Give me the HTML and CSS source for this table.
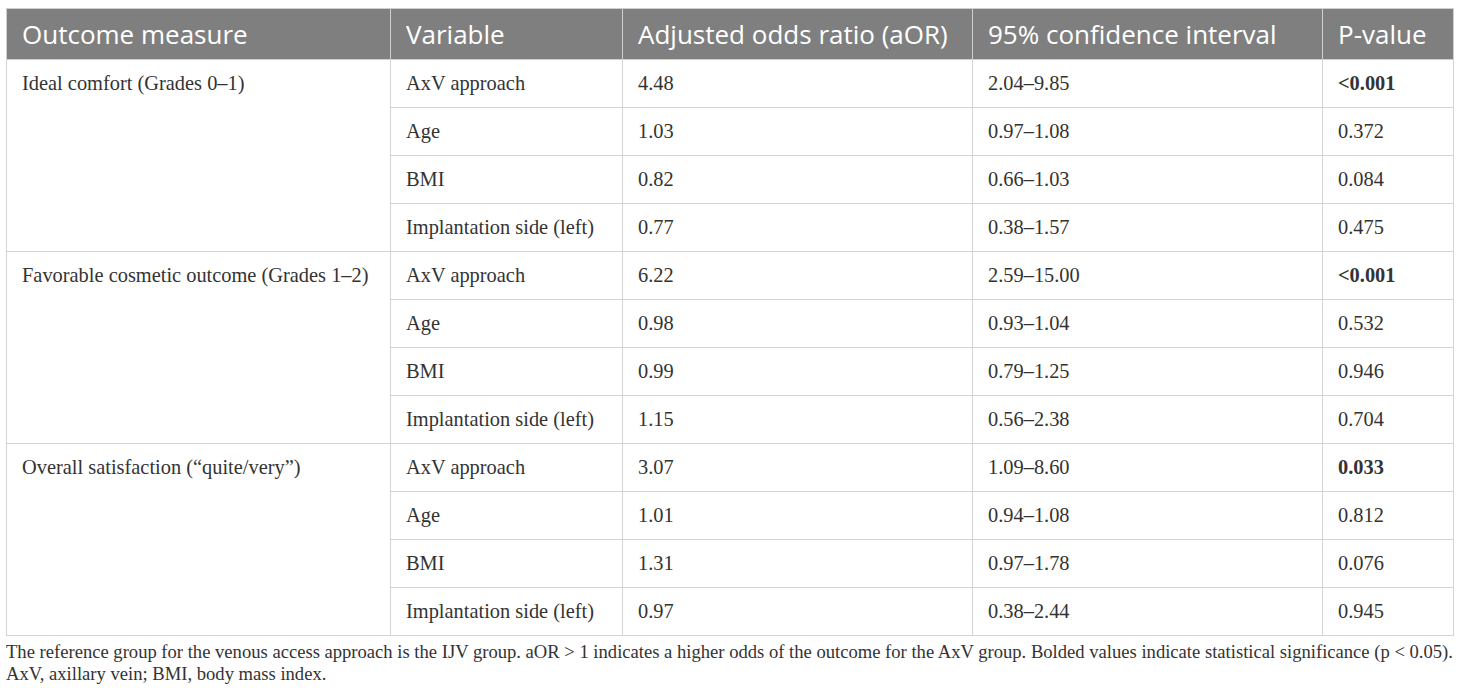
FILE: index.html
```html
<!DOCTYPE html>
<html>
<head>
<meta charset="utf-8">
<link rel="stylesheet" href="styles.css">
</head>
<body>
<div class="wrap">
<table class="tbl">
<colgroup>
<col class="c1"><col class="c2"><col class="c3"><col class="c4"><col class="c5">
</colgroup>
<thead>
<tr><th>Outcome measure</th><th>Variable</th><th>Adjusted odds ratio (aOR)</th><th>95% confidence interval</th><th>P-value</th></tr>
</thead>
<tbody>
<tr><td rowspan="4" class="grp">Ideal comfort (Grades 0–1)</td><td>AxV approach</td><td>4.48</td><td>2.04–9.85</td><td class="b">&lt;0.001</td></tr>
<tr><td>Age</td><td>1.03</td><td>0.97–1.08</td><td>0.372</td></tr>
<tr><td>BMI</td><td>0.82</td><td>0.66–1.03</td><td>0.084</td></tr>
<tr><td>Implantation side (left)</td><td>0.77</td><td>0.38–1.57</td><td>0.475</td></tr>
<tr><td rowspan="4" class="grp">Favorable cosmetic outcome (Grades 1–2)</td><td>AxV approach</td><td>6.22</td><td>2.59–15.00</td><td class="b">&lt;0.001</td></tr>
<tr><td>Age</td><td>0.98</td><td>0.93–1.04</td><td>0.532</td></tr>
<tr><td>BMI</td><td>0.99</td><td>0.79–1.25</td><td>0.946</td></tr>
<tr><td>Implantation side (left)</td><td>1.15</td><td>0.56–2.38</td><td>0.704</td></tr>
<tr><td rowspan="4" class="grp">Overall satisfaction (“quite/very”)</td><td>AxV approach</td><td>3.07</td><td>1.09–8.60</td><td class="b">0.033</td></tr>
<tr><td>Age</td><td>1.01</td><td>0.94–1.08</td><td>0.812</td></tr>
<tr><td>BMI</td><td>1.31</td><td>0.97–1.78</td><td>0.076</td></tr>
<tr><td>Implantation side (left)</td><td>0.97</td><td>0.38–2.44</td><td>0.945</td></tr>
</tbody>
</table>
<div class="foot">
<p>The reference group for the venous access approach is the IJV group. aOR &gt; 1 indicates a higher odds of the outcome for the AxV group. Bolded values indicate statistical significance (p &lt; 0.05).</p>
<p>AxV, axillary vein; BMI, body mass index.</p>
</div>
</div>
</body>
</html>
```
FILE: styles.css
```css
html, body {
  margin: 0;
  padding: 0;
  background: #fff;
}
.wrap {
  padding: 8px 7px 0 6px;
}
.tbl {
  width: 1447px;
  border-collapse: collapse;
  table-layout: fixed;
  font-family: "Liberation Serif", "Times New Roman", serif;
  color: #333;
}
.c1 { width: 384px; }
.c2 { width: 232px; }
.c3 { width: 350px; }
.c4 { width: 350px; }
.c5 { width: 131px; }
.tbl th {
  background: #7f7f7f;
  color: #fff;
  font-family: "Open Sans", "Noto Sans", sans-serif;
  font-weight: 400;
  font-size: 26px;
  text-align: left;
  height: 51px;
  padding: 0 15px;
  border: 1px solid #cfcfcf;
  box-sizing: border-box;
  white-space: nowrap;
}
.tbl td {
  font-size: 20.4px;
  height: 48px;
  padding: 0 15px;
  border: 1px solid #d4d4d4;
  box-sizing: border-box;
  vertical-align: middle;
  white-space: nowrap;
}
.tbl td.grp {
  vertical-align: top;
  padding-top: 12px;
}
.tbl td.b {
  font-weight: 700;
}
.foot {
  font-family: "Liberation Serif", "Times New Roman", serif;
  font-size: 18.6px;
  color: #333;
  padding-top: 5px;
}
.foot p {
  margin: 0;
  line-height: 22px;
  white-space: nowrap;
}
```
